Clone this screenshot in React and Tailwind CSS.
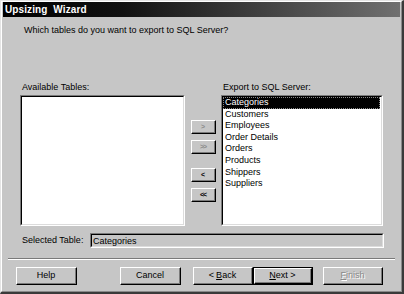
import React from 'react';

const font = { fontFamily: '"Liberation Sans", Arial, sans-serif' };

const tables = ['Categories', 'Customers', 'Employees', 'Order Details', 'Orders', 'Products', 'Shippers', 'Suppliers'];

function Raised({ className = '', children }) {
    return (
        <div className={`flex items-center justify-center border-t border-l border-t-white border-l-white border-r border-b border-r-black border-b-black bg-[#c6c6c6] ${className}`}>
            <div className="flex h-full w-full items-center justify-center border-r border-b border-r-[#7a7a7a] border-b-[#7a7a7a]">
                {children}
            </div>
        </div>
    );
}

function Sunken({ className = '', children }) {
    return (
        <div className={`border-t border-l border-t-[#7a7a7a] border-l-[#7a7a7a] border-r border-b border-r-white border-b-white ${className}`}>
            <div className="h-full w-full border-t border-l border-t-black border-l-black border-r border-b border-r-[#dcdcdc] border-b-[#dcdcdc]">
                {children}
            </div>
        </div>
    );
}

export default function App() {
    return (
        <div style={font} className="w-[404px] h-[294px] bg-[#c6c6c6] text-black text-[9px] leading-[11px] border-t border-l border-t-[#e4e4e4] border-l-[#e4e4e4] border-r-2 border-b-2 border-r-[#3a3a3a] border-b-[#3a3a3a] flex flex-col overflow-hidden">
            <div className="border-t border-l border-t-white border-l-white border-r border-b border-r-[#8a8a8a] border-b-[#8a8a8a] flex flex-col flex-1">
                <div className="h-[15px] mx-[1px] mt-[0px] bg-[linear-gradient(to_right,#000_0%,#111_30%,#707070_100%)] flex items-center pl-[2px]">
                    <span className="text-white font-bold text-[10px] tracking-[0.1px] [word-spacing:3px]">Upsizing Wizard</span>
                </div>

                <div className="pl-[22px] mt-[8px]">Which tables do you want to export to SQL Server?</div>

                <div className="flex mt-[46px] pl-[18px]">
                    <div className="w-[165px] pl-[2px]">Available Tables:</div>
                    <div className="ml-[36px] pl-[2px]">Export to SQL Server:</div>
                </div>

                <div className="flex mt-[2px] pl-[18px] h-[131px]">
                    <Sunken className="w-[165px] h-full bg-white" />
                    <div className="flex flex-col w-[25px] ml-[6px] mr-[5px]">
                        <Raised className="h-[14px] mt-[25px]">
                            <span className="text-[7px] font-bold text-[#8a8a8a]">&gt;</span>
                        </Raised>
                        <Raised className="h-[14px] mt-[6px]">
                            <span className="text-[7px] font-bold text-[#8a8a8a] tracking-[-1px]">&gt;&gt;</span>
                        </Raised>
                        <Raised className="h-[14px] mt-[14px]">
                            <span className="text-[7px] font-bold">&lt;</span>
                        </Raised>
                        <Raised className="h-[14px] mt-[6px]">
                            <span className="text-[7px] font-bold tracking-[-1px]">&lt;&lt;</span>
                        </Raised>
                    </div>
                    <Sunken className="w-[162px] h-full bg-white">
                        <div className="flex flex-col pt-[0px]">
                            {tables.map((t, i) => (
                                <div key={t} className={`h-[11.6px] leading-[11.6px] pl-[2px] mr-[1px] ${i === 0 ? 'bg-black text-white outline outline-1 outline-dotted outline-[#888] -outline-offset-1' : ''}`}>
                                    {t}
                                </div>
                            ))}
                        </div>
                    </Sunken>
                </div>

                <div className="flex items-center mt-[7px] pl-[20px]">
                    <div className="w-[68px]">Selected Table:</div>
                    <Sunken className="w-[294px] h-[15px]">
                        <div className="pl-[1px] leading-[12px]">Categories</div>
                    </Sunken>
                </div>

                <div className="mt-[10px] mx-[6px] border-t border-t-[#7a7a7a] border-b border-b-white" />

                <div className="flex mt-[7px] pl-[14px]">
                    <Raised className="w-[61px] h-[18px]">Help</Raised>
                    <Raised className="w-[61px] h-[18px] ml-[43px]">Cancel</Raised>
                    <Raised className="w-[60px] h-[18px] ml-[12px]">&lt; <span className="underline ml-[2px]">B</span>ack</Raised>
                    <div className="w-[60px] h-[18px] border border-black">
                        <Raised className="w-full h-full">
                            <span className="underline">N</span>ext &gt;
                        </Raised>
                    </div>
                    <Raised className="w-[60px] h-[18px] ml-[10px]">
                        <span className="text-[#8a8a8a] [text-shadow:1px_1px_0_#fff]"><span className="underline">F</span>inish</span>
                    </Raised>
                </div>
            </div>
        </div>
    );
}
